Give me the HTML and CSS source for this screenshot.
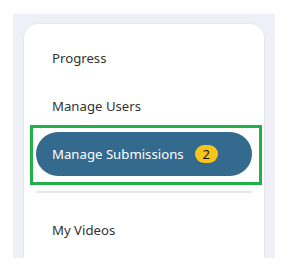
FILE: index.html
```html
<!DOCTYPE html>
<html lang="en">
<head>
    <meta charset="UTF-8">
    <meta name="viewport" content="width=device-width, initial-scale=1.0">
    <title>Admin menu</title>
    <link rel="stylesheet" href="styles.css">
</head>
<body>
    <div class="panel">
        <nav class="card">
            <a class="nav-item" href="#">Progress</a>
            <a class="nav-item" href="#">Manage Users</a>
            <a class="nav-item active" href="#">
                Manage Submissions
                <span class="badge">2</span>
            </a>
            <div class="divider"></div>
            <a class="nav-item" href="#">My Videos</a>
        </nav>
    </div>
</body>
</html>
```

FILE: styles.css
```css
* {
    margin: 0;
    padding: 0;
    box-sizing: border-box;
}

body {
    background: #fff;
    font-family: 'Noto Sans', 'Open Sans', sans-serif;
    padding: 14px 0 0 13px;
}

.panel {
    width: 262px;
    height: 244px;
    background: #efeff7;
    padding: 10px 11px 0;
    overflow: hidden;
}

.card {
    background: #fff;
    border-radius: 14px;
    box-shadow: 0 0 2px rgba(0, 0, 0, 0.12);
    padding: 12px 12px 20px;
    display: flex;
    flex-direction: column;
    gap: 4px;
    min-height: 300px;
}

.nav-item {
    position: relative;
    display: flex;
    align-items: center;
    height: 44px;
    padding: 0 16px;
    border-radius: 22px;
    color: #333;
    font-size: 13.2px;
    text-decoration: none;
}

.nav-item.active {
    background: #346a8e;
    color: #fff;
}

.nav-item.active::after {
    content: '';
    position: absolute;
    top: -7px;
    left: -6px;
    right: -10px;
    bottom: -9px;
    border: 3px solid #22b04b;
}

.badge {
    display: inline-flex;
    align-items: center;
    justify-content: center;
    flex-shrink: 0;
    width: 23px;
    height: 18px;
    margin-left: 11px;
    border-radius: 9px;
    background: #f6c41b;
    color: #111;
    font-size: 13px;
}

.divider {
    height: 2px;
    background: #e8e8ea;
    margin: 11px 0;
}
```
